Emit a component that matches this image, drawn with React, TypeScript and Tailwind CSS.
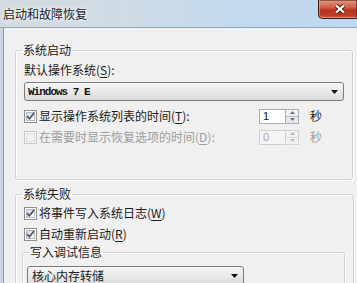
import React from "react";

function Check({ checked, disabled }: { checked?: boolean; disabled?: boolean }) {
  return (
    <span
      className={
        disabled
          ? "w-[13px] h-[13px] shrink-0 border border-[#c8c8c8] bg-[#f7f7f7] flex items-center justify-center"
          : "w-[13px] h-[13px] shrink-0 border border-[#8e8f8f] bg-white flex items-center justify-center"
      }
    >
      <span
        className={
          disabled
            ? "w-[9px] h-[9px] border border-[#dedede] bg-[#f3f3f3] flex items-center justify-center"
            : "w-[9px] h-[9px] border border-[#b6bbc0] bg-[linear-gradient(135deg,#d6d8db,#fafafa)] flex items-center justify-center"
        }
      >
        {checked ? (
          <svg width="9" height="9" viewBox="0 0 9 9" className="overflow-visible">
            <path d="M1 4.2L3.4 6.8L8 1" fill="none" stroke="#4b5663" strokeWidth="1.7" />
          </svg>
        ) : null}
      </span>
    </span>
  );
}

function Spin({ value, disabled }: { value: string; disabled?: boolean }) {
  return (
    <div className="flex h-[15px] w-[40px]">
      <div
        className={
          disabled
            ? "w-[26px] border border-r-0 border-[#cfcfcf] bg-[#f4f4f4] text-[#a6a6a6] text-[11px] leading-[13px] pl-[3px] font-['Liberation_Sans',sans-serif]"
            : "w-[26px] border border-r-0 border-[#abadb3] bg-white text-[#111] text-[11px] leading-[13px] pl-[3px] font-['Liberation_Sans',sans-serif]"
        }
      >
        {value}
      </div>
      <div
        className={
          disabled
            ? "w-[14px] flex flex-col border border-[#d2d2d2] bg-[#f1f1f1]"
            : "w-[14px] flex flex-col border border-[#a9aeb4] bg-[linear-gradient(#f6f6f6,#e1e4e8)]"
        }
      >
        <div className={disabled ? "flex-1 flex items-center justify-center border-b border-[#dadada]" : "flex-1 flex items-center justify-center border-b border-[#b8bcc1]"}>
          <svg width="5" height="3" viewBox="0 0 5 3">
            <path d="M0 3L2.5 0L5 3z" fill={disabled ? "#b9b9b9" : "#6b7077"} />
          </svg>
        </div>
        <div className="flex-1 flex items-center justify-center">
          <svg width="5" height="3" viewBox="0 0 5 3">
            <path d="M0 0L5 0L2.5 3z" fill={disabled ? "#b9b9b9" : "#6b7077"} />
          </svg>
        </div>
      </div>
    </div>
  );
}

function Arrow() {
  return (
    <svg width="7" height="4" viewBox="0 0 7 4" className="shrink-0">
      <path d="M0 0H7L3.5 4z" fill="#111" />
    </svg>
  );
}

function CloseButton() {
  return (
    <svg width="39" height="19" viewBox="0 0 39 19" className="shrink-0 block">
      <defs>
        <linearGradient id="closegrad" x1="0" y1="0" x2="0" y2="1">
          <stop offset="0" stopColor="#e39886" />
          <stop offset="0.4" stopColor="#cf5e48" />
          <stop offset="0.55" stopColor="#b8321c" />
          <stop offset="0.85" stopColor="#c03d27" />
          <stop offset="1" stopColor="#d4705b" />
        </linearGradient>
      </defs>
      <path d="M0.5 0V14.5Q0.5 18.5 4.5 18.5H39V0z" fill="url(#closegrad)" stroke="#3f1812" strokeWidth="1" />
      <path d="M1.5 0V14.3Q1.5 17.5 4.7 17.5H39" fill="none" stroke="#f0b8aa" strokeOpacity="0.5" strokeWidth="1" />
      <path d="M18 5.5L26 12.5M26 5.5L18 12.5" stroke="#4a1a12" strokeWidth="4.2" />
      <path d="M18 5.5L26 12.5M26 5.5L18 12.5" stroke="#ffffff" strokeWidth="2.2" />
    </svg>
  );
}

export default function App() {
  return (
    <div className="w-[357px] h-[283px] overflow-hidden bg-[#f0f0f0] font-['Noto_Sans_CJK_SC','Liberation_Sans',sans-serif] text-[12px] leading-[16px] text-[#1b1b1b]">
      {/* title bar */}
      <div className="h-[28px] flex items-start border-b border-[#93a6b6] bg-[linear-gradient(90deg,#d3dae0_0%,#cfdbe5_35%,#c3daed_65%,#bcd8f0_100%)]">
        <span className="pl-[3px] leading-[27px] text-[#1a1a1a] [text-shadow:0_0_6px_#ffffff,0_0_3px_#ffffff]">
          启动和故障恢复
        </span>
        <span className="flex-1" />
        <CloseButton />
      </div>

      <div className="flex h-[255px]">
        <div className="w-[3px] bg-[#cbd8e3]" />
        <div className="flex-1 border-l border-[#8e9ba7] pl-[11px] pt-[14px]">
          {/* 系统启动 */}
          <fieldset className="w-[338px] border border-[#cfd3d6] rounded-[3px] shadow-[inset_1px_1px_0_#ffffff,1px_1px_0_#ffffff] px-[8px] pb-[34px]">
            <legend className="ml-[-2px] px-[1px] leading-[16px]">系统启动</legend>
            <div className="mt-[4px] h-[16px]">
              默认操作系统(<span className="underline underline-offset-2">S</span>):
            </div>
            <div className="mt-[4px] h-[19px] w-[320px] rounded-[3px] border border-[#7a7a7a] bg-[linear-gradient(#f7f7f7,#e9e9e9_50%,#dadada)] flex items-center pl-[3px] pr-[5px]">
              <span className="font-['Liberation_Mono',monospace] font-bold text-[11px] tracking-[-1px] text-[#151515] whitespace-pre">
                Windows 7 E
              </span>
              <span className="flex-1" />
              <Arrow />
            </div>
            <div className="mt-[7px] h-[16px] flex items-center">
              <div className="w-[235px] flex items-center gap-[2px]">
                <Check checked />
                <span>
                  显示操作系统列表的时间(<span className="underline underline-offset-2">T</span>):
                </span>
              </div>
              <Spin value="1" />
              <span className="ml-[11px]">秒</span>
            </div>
            <div className="mt-[5px] h-[16px] flex items-center text-[#9d9d9d]">
              <div className="w-[235px] flex items-center gap-[2px]">
                <Check disabled />
                <span>
                  在需要时显示恢复选项的时间(<span className="underline underline-offset-2">D</span>):
                </span>
              </div>
              <Spin value="0" disabled />
              <span className="ml-[11px]">秒</span>
            </div>
          </fieldset>

          {/* 系统失败 */}
          <fieldset className="mt-[6px] w-[338px] border border-[#cfd3d6] rounded-[3px] shadow-[inset_1px_1px_0_#ffffff,1px_1px_0_#ffffff] px-[8px] pb-[30px]">
            <legend className="ml-[-2px] px-[1px] leading-[16px]">系统失败</legend>
            <div className="mt-[3px] h-[16px] flex items-center gap-[2px]">
              <Check checked />
              <span>
                将事件写入系统日志(<span className="underline underline-offset-2">W</span>)
              </span>
            </div>
            <div className="mt-[5px] h-[16px] flex items-center gap-[2px]">
              <Check checked />
              <span>
                自动重新启动(<span className="underline underline-offset-2">R</span>)
              </span>
            </div>
            <fieldset className="mt-[2px] ml-[-2px] w-[323px] border border-[#cfd3d6] rounded-[3px] shadow-[inset_1px_1px_0_#ffffff,1px_1px_0_#ffffff] px-[4px] pb-[10px]">
              <legend className="ml-[2px] px-[1px] leading-[16px]">写入调试信息</legend>
              <div className="mt-[6px] h-[20px] w-[217px] rounded-[3px] border border-[#7a7a7a] bg-[linear-gradient(#f7f7f7,#e9e9e9_50%,#dadada)] flex items-center pl-[4px] pr-[5px]">
                <span>核心内存转储</span>
                <span className="flex-1" />
                <Arrow />
              </div>
            </fieldset>
          </fieldset>
        </div>
      </div>
    </div>
  );
}
